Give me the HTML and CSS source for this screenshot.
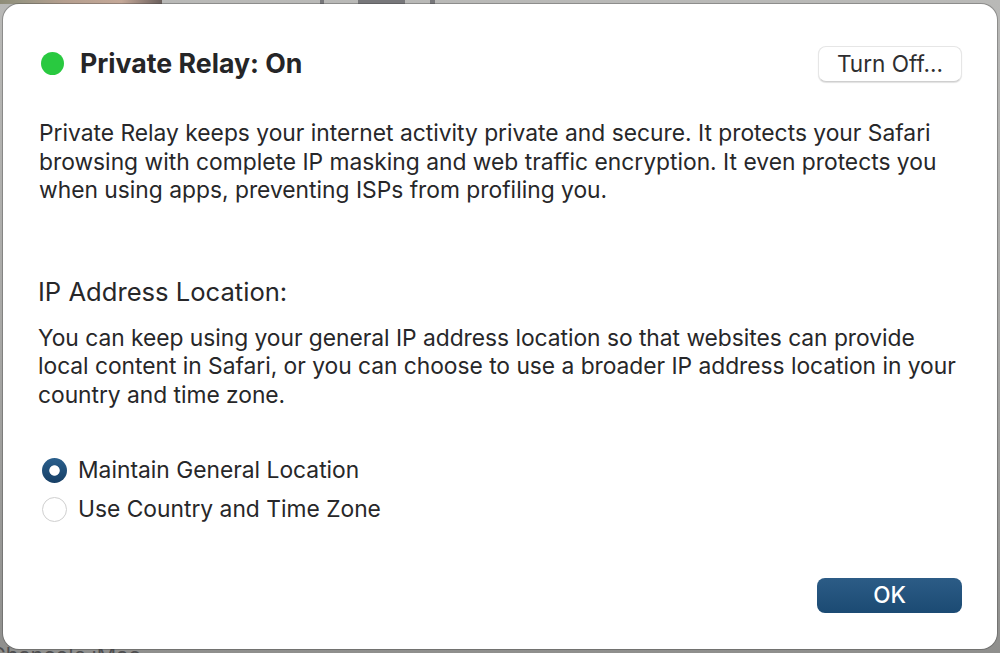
FILE: index.html
```html
<!DOCTYPE html>
<html lang="en">
<head>
<meta charset="utf-8">
<title>Private Relay</title>
<link rel="stylesheet" href="styles.css">
</head>
<body>
<div class="backdrop">
  <span class="peek peek-photo"></span>
  <span class="peek peek-dark peek-dark-a"></span>
  <span class="peek peek-dark peek-dark-b"></span>
  <span class="peek peek-dark peek-dark-c"></span>
  <span class="peek peek-text">Chance's iMac</span>
</div>
<main class="dialog">
  <header class="status-row">
    <span class="status-dot"></span>
    <h1 class="status-title">Private Relay: On</h1>
    <button class="btn btn-plain">Turn Off...</button>
  </header>
  <p class="copy copy-intro">Private Relay keeps your internet activity private and secure. It protects your Safari<br>browsing with complete IP masking and web traffic encryption. It even protects you<br>when using apps, preventing ISPs from profiling you.</p>
  <h2 class="section-title">IP Address Location:</h2>
  <p class="copy copy-section">You can keep using your general IP address location so that websites can provide<br>local content in Safari, or you can choose to use a broader IP address location in your<br>country and time zone.</p>
  <div class="options">
    <div class="option"><span class="radio radio-on"></span><span>Maintain General Location</span></div>
    <div class="option"><span class="radio"></span><span>Use Country and Time Zone</span></div>
  </div>
  <footer class="actions">
    <button class="btn btn-primary">OK</button>
  </footer>
</main>
</body>
</html>
```
FILE: styles.css
```css
* { box-sizing: border-box; }
html, body { margin: 0; height: 100%; }
body {
  width: 1000px;
  height: 653px;
  overflow: hidden;
  position: relative;
  padding: 4px 3px 3px 3px;
  background: linear-gradient(#b9b9b7, #a8a8a6 50%, #8f8f8d);
  font-family: Inter, "Liberation Sans", sans-serif;
  color: #272729;
}
.backdrop { position: absolute; inset: 0; overflow: hidden; }
.peek { position: absolute; }
.peek-photo {
  left: 0; top: 0; width: 162px; height: 4px;
  background: linear-gradient(90deg, #8f8d78 0, #9a9684 14%, #b59f8f 40%, #c4a898 75%, #6a5f5c 100%);
}
.peek-dark { top: 0; height: 4px; background: #77777a; }
.peek-dark-a { left: 320px; width: 4px; }
.peek-dark-b { left: 358px; width: 47px; }
.peek-dark-c { left: 430px; width: 5px; }
.peek-text {
  left: -10px;
  top: 643px;
  font-size: 21.5px;
  line-height: 24px;
  color: #4e4e50;
  white-space: nowrap;
}
.dialog {
  position: relative;
  height: 645px;
  background: #fff;
  border-radius: 16px;
  padding: 0 35px;
  display: flex;
  flex-direction: column;
  box-shadow: 0 0 0 1px rgba(60,60,60,.35);
}
.status-row {
  display: flex;
  align-items: center;
  height: 36px;
  margin-top: 42px;
  padding-left: 3px;
}
.status-dot {
  width: 23px;
  height: 23px;
  border-radius: 50%;
  background: #29c940;
  margin: 0 16px 2px 0;
}
.status-title {
  margin: 0;
  padding-bottom: 2px;
  font-size: 26.7px;
  font-weight: 700;
  flex: 1;
  color: #252527;
}
.btn {
  font: inherit;
  border-radius: 8px;
  padding: 0 0 2px;
}
.btn-plain {
  width: 144px;
  height: 36px;
  font-size: 22.6px;
  color: #2e2e30;
  background: #fff;
  border: 1px solid #e6e6e6;
  border-bottom-color: #cfcfcf;
  box-shadow: 0 1px 1px rgba(0,0,0,.12);
}
.copy {
  margin: 0;
  font-size: 22.8px;
  line-height: 28.5px;
  white-space: nowrap;
}
.copy-intro { margin-top: 37px; padding-left: 1px; }
.section-title {
  margin: 71px 0 0;
  font-size: 25.6px;
  line-height: 32px;
  font-weight: 400;
}
.copy-section { margin-top: 16px; letter-spacing: -0.03px; }
.options {
  margin-top: 46px;
  padding-left: 4px;
  display: flex;
  flex-direction: column;
  gap: 9px;
  font-size: 22.8px;
  line-height: 30px;
}
.option { display: flex; align-items: center; gap: 11px; }
.radio {
  width: 25px;
  height: 25px;
  border-radius: 50%;
  border: 1px solid #cfcfcf;
  background: #fff;
}
.radio-on {
  border: 0;
  background:
    radial-gradient(circle, #fff 4.8px, transparent 5.6px),
    linear-gradient(#2a5f8c, #173f66);
}
.actions {
  margin-top: auto;
  margin-bottom: 36px;
  display: flex;
  justify-content: flex-end;
}
.btn-primary {
  width: 145px;
  height: 35px;
  border: 0;
  color: #fff;
  font-size: 22.5px;
  font-weight: 500;
  background: linear-gradient(#2c5c86, #1b4a73);
}
```
